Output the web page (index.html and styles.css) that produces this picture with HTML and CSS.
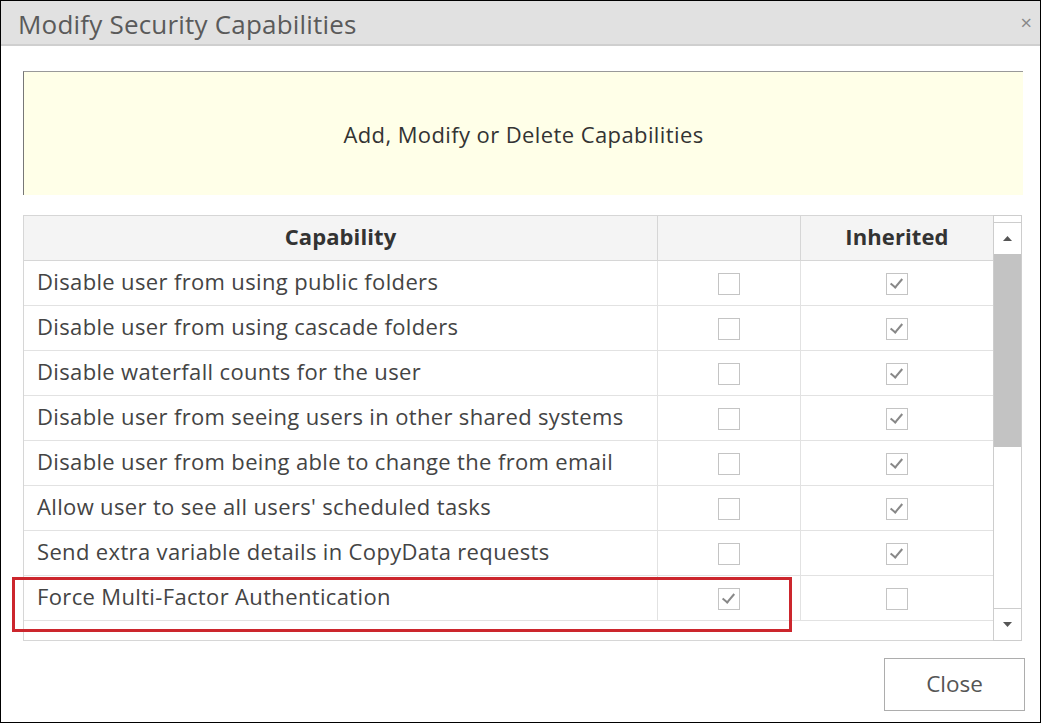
FILE: index.html
```html
<!DOCTYPE html>
<html>
<head>
<meta charset="utf-8">
<link rel="stylesheet" href="styles.css">
</head>
<body>
<div class="dialog">
  <div class="titlebar">
    <span class="title">Modify Security Capabilities</span>
    <span class="x">×</span>
  </div>
  <div class="content">
    <div class="banner">Add, Modify or Delete Capabilities</div>
    <div class="gridwrap">
      <div class="grid">
        <div class="row head">
          <div class="c1">Capability</div>
          <div class="c2"></div>
          <div class="c3">Inherited</div>
        </div>
        <div class="row"><div class="c1">Disable user from using public folders</div><div class="c2"><span class="cb"></span></div><div class="c3"><span class="cb on"></span></div></div>
        <div class="row"><div class="c1">Disable user from using cascade folders</div><div class="c2"><span class="cb"></span></div><div class="c3"><span class="cb on"></span></div></div>
        <div class="row"><div class="c1">Disable waterfall counts for the user</div><div class="c2"><span class="cb"></span></div><div class="c3"><span class="cb on"></span></div></div>
        <div class="row"><div class="c1">Disable user from seeing users in other shared systems</div><div class="c2"><span class="cb"></span></div><div class="c3"><span class="cb on"></span></div></div>
        <div class="row"><div class="c1">Disable user from being able to change the from email</div><div class="c2"><span class="cb"></span></div><div class="c3"><span class="cb on"></span></div></div>
        <div class="row"><div class="c1">Allow user to see all users' scheduled tasks</div><div class="c2"><span class="cb"></span></div><div class="c3"><span class="cb on"></span></div></div>
        <div class="row"><div class="c1">Send extra variable details in CopyData requests</div><div class="c2"><span class="cb"></span></div><div class="c3"><span class="cb on"></span></div></div>
        <div class="row"><div class="c1">Force Multi-Factor Authentication</div><div class="c2"><span class="cb on"></span></div><div class="c3"><span class="cb"></span></div></div>
      </div>
      <div class="scrollbar">
        <div class="cap"></div>
        <div class="btn"><svg width="9" height="5" viewBox="0 0 9 5"><path d="M0 5 L4.5 0 L9 5 Z" fill="#555"/></svg></div>
        <div class="thumb"></div>
        <div class="track"></div>
        <div class="btn down"><svg width="9" height="5" viewBox="0 0 9 5"><path d="M0 0 L4.5 5 L9 0 Z" fill="#555"/></svg></div>
      </div>
      <div class="highlight"></div>
    </div>
    <div class="footer">
      <button class="close">Close</button>
    </div>
  </div>
</div>
</body>
</html>
```
FILE: styles.css
```css
html, body {
  margin: 0;
  padding: 0;
  background: #fff;
}
body {
  font-family: "Open Sans", "Noto Sans", sans-serif;
}
.dialog {
  width: 1041px;
  height: 723px;
  box-sizing: border-box;
  border: 1px solid #000;
  display: flex;
  flex-direction: column;
  background: #fff;
}
.titlebar {
  height: 43px;
  background: #e1e1e1;
  border-bottom: 2px solid #cfcfcf;
  display: flex;
  align-items: center;
  justify-content: space-between;
  padding: 0 8px 0 17px;
  flex-shrink: 0;
}
.title {
  font-size: 26px;
  color: #5a5a5a;
  letter-spacing: 0.2px;
  line-height: 1;
  margin-top: 2px;
}
.x {
  font-size: 20px;
  color: #888;
  line-height: 1;
}
.content {
  padding: 25px 17px 0 22px;
  display: flex;
  flex-direction: column;
}
.banner {
  height: 123px;
  border-top: 1px solid #999;
  border-left: 1px solid #777;
  background: #ffffe8;
  display: flex;
  align-items: center;
  justify-content: center;
  font-size: 22px;
  letter-spacing: 0.4px;
  color: #333;
}
.gridwrap {
  margin-top: 20px;
  display: flex;
  position: relative;
  height: 426px;
}
.grid {
  width: 970px;
  border: 1px solid #d6d6d6;
  border-right: none;
  box-sizing: border-box;
}
.row {
  display: flex;
  height: 45px;
  border-bottom: 1px solid #e2e2e2;
  box-sizing: border-box;
  font-size: 22px;
  letter-spacing: 0.35px;
  color: #444;
}
.row > div {
  display: flex;
  align-items: center;
  box-sizing: border-box;
  line-height: 1;
}
.c1 {
  width: 634px;
  padding-left: 13px;
  padding-bottom: 4px;
  border-right: 1px solid #e2e2e2;
  white-space: nowrap;
}
.c2 {
  width: 143px;
  justify-content: center;
  border-right: 1px solid #e2e2e2;
}
.c3 {
  flex: 1;
  justify-content: center;
}
.row.head {
  background: #f4f4f4;
  font-weight: bold;
  letter-spacing: 0.1px;
  color: #333;
  border-bottom: 1px solid #d6d6d6;
}
.row.head .c1 {
  justify-content: center;
  padding-left: 0;
  border-right-color: #d6d6d6;
}
.row.head .c2 {
  border-right-color: #d6d6d6;
}
.row.head .c3 {
  padding-bottom: 4px;
}
.cb {
  width: 20px;
  height: 20px;
  border: 1px solid #c4c4c4;
  background: #fff;
  position: relative;
  margin-top: 2px;
}
.cb.on::after {
  content: "";
  position: absolute;
  left: 6px;
  top: 2px;
  width: 5px;
  height: 10px;
  border-right: 2px solid #888;
  border-bottom: 2px solid #888;
  transform: rotate(40deg);
}
.scrollbar {
  width: 29px;
  border: 1px solid #cdcdcd;
  box-sizing: border-box;
  display: flex;
  flex-direction: column;
  background: #fff;
}
.cap {
  height: 6px;
  border-bottom: 1px solid #cdcdcd;
}
.btn {
  height: 31px;
  display: flex;
  align-items: center;
  justify-content: center;
  background: #fff;
}
.btn.down {
  border-top: 1px solid #cdcdcd;
}
.thumb {
  height: 193px;
  background: #c3c3c3;
}
.track {
  flex: 1;
}
.highlight {
  position: absolute;
  left: -11px;
  top: 362px;
  width: 780px;
  height: 55px;
  border: 3px solid #cc262d;
  box-sizing: border-box;
  pointer-events: none;
}
.footer {
  display: flex;
  justify-content: flex-end;
  margin-top: 17px;
  padding-right: 0;
}
.close {
  width: 141px;
  height: 53px;
  border: 1px solid #adadad;
  background: #fff;
  font-family: "Open Sans", "Noto Sans", sans-serif;
  font-size: 22.5px;
  color: #555;
  margin-right: -2px;
  padding-bottom: 4px;
}
```
